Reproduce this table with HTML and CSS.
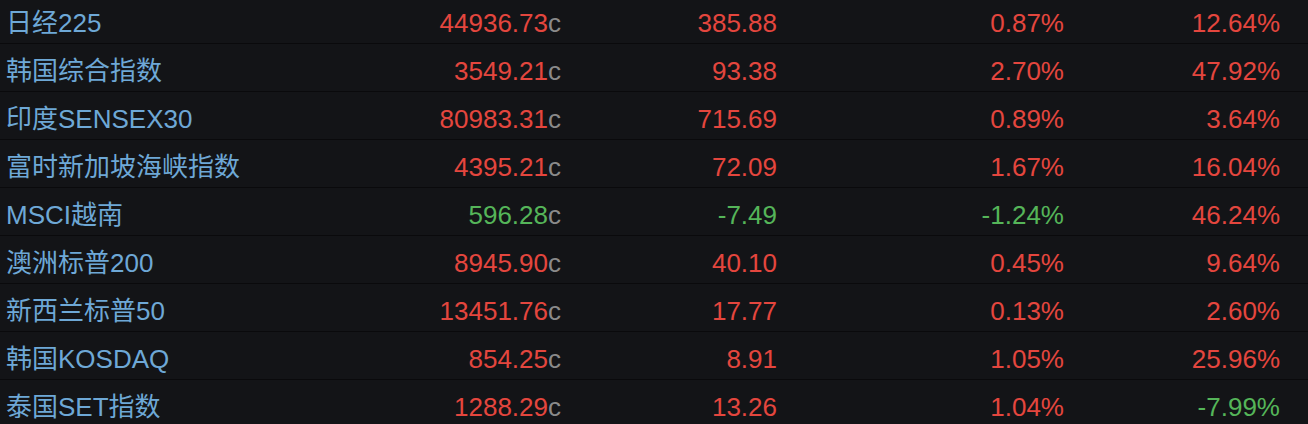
FILE: index.html
```html
<!DOCTYPE html>
<html lang="zh-CN">

<head>
    <meta charset="UTF-8">
    <meta name="viewport" content="width=device-width, initial-scale=1.0">
    <title>亚太指数</title>
    <link rel="stylesheet" href="styles.css">
</head>

<body>
    <div class="quotes">
        <div class="row">
            <span class="name">日经225</span>
            <span class="num up">44936.73<i class="flag">c</i></span>
            <span class="num up">385.88</span>
            <span class="num up">0.87%</span>
            <span class="num up">12.64%</span>
        </div>
        <div class="row">
            <span class="name">韩国综合指数</span>
            <span class="num up">3549.21<i class="flag">c</i></span>
            <span class="num up">93.38</span>
            <span class="num up">2.70%</span>
            <span class="num up">47.92%</span>
        </div>
        <div class="row">
            <span class="name">印度SENSEX30</span>
            <span class="num up">80983.31<i class="flag">c</i></span>
            <span class="num up">715.69</span>
            <span class="num up">0.89%</span>
            <span class="num up">3.64%</span>
        </div>
        <div class="row">
            <span class="name">富时新加坡海峡指数</span>
            <span class="num up">4395.21<i class="flag">c</i></span>
            <span class="num up">72.09</span>
            <span class="num up">1.67%</span>
            <span class="num up">16.04%</span>
        </div>
        <div class="row">
            <span class="name">MSCI越南</span>
            <span class="num down">596.28<i class="flag">c</i></span>
            <span class="num down">-7.49</span>
            <span class="num down">-1.24%</span>
            <span class="num up">46.24%</span>
        </div>
        <div class="row">
            <span class="name">澳洲标普200</span>
            <span class="num up">8945.90<i class="flag">c</i></span>
            <span class="num up">40.10</span>
            <span class="num up">0.45%</span>
            <span class="num up">9.64%</span>
        </div>
        <div class="row">
            <span class="name">新西兰标普50</span>
            <span class="num up">13451.76<i class="flag">c</i></span>
            <span class="num up">17.77</span>
            <span class="num up">0.13%</span>
            <span class="num up">2.60%</span>
        </div>
        <div class="row">
            <span class="name">韩国KOSDAQ</span>
            <span class="num up">854.25<i class="flag">c</i></span>
            <span class="num up">8.91</span>
            <span class="num up">1.05%</span>
            <span class="num up">25.96%</span>
        </div>
        <div class="row">
            <span class="name">泰国SET指数</span>
            <span class="num up">1288.29<i class="flag">c</i></span>
            <span class="num up">13.26</span>
            <span class="num up">1.04%</span>
            <span class="num down">-7.99%</span>
        </div>
    </div>
</body>

</html>
```

FILE: styles.css
```css
body {
    margin: 0;
    background-color: #131417;
    font-family: "Liberation Sans", "Noto Sans CJK SC", sans-serif;
    font-size: 26px;
    overflow: hidden;
}

.quotes {
    margin-top: -4px;
}

.row {
    display: grid;
    grid-template-columns: 400px 161px 216px 287px 216px;
    align-items: center;
    height: 48px;
    padding-top: 8px;
    box-sizing: border-box;
    line-height: 29px;
    border-bottom: 1px solid #0a0a0c;
}

.name {
    padding-left: 6px;
    color: #6ea8d6;
    white-space: nowrap;
}

.num {
    text-align: right;
    white-space: nowrap;
}

.up {
    color: #e4463e;
}

.down {
    color: #55b559;
}

.flag {
    font-style: normal;
    color: #8a8a8a;
}
```
